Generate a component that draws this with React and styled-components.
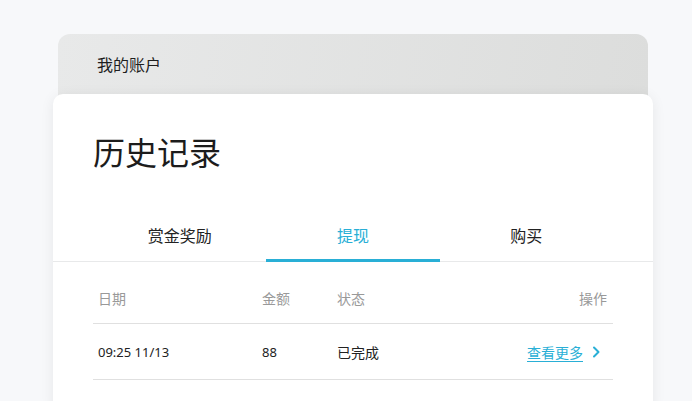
import styled, { createGlobalStyle } from 'styled-components';

const GlobalStyle = createGlobalStyle`
  html, body {
    margin: 0;
    padding: 0;
    background: #f7f8fa;
    font-family: "Noto Sans", "Noto Sans CJK SC", sans-serif;
    color: #222;
  }
`;

const Page = styled.div`
  padding: 34px 0 0 53px;
  width: 600px;
`;

const AccountBar = styled.div`
  margin: 0 5px;
  height: 64px;
  padding: 0 0 4px 39px;
  box-sizing: border-box;
  border-radius: 12px 12px 0 0;
  background: linear-gradient(100deg, #e8e9e9 0%, #dcdddc 100%);
  display: flex;
  align-items: center;
  font-size: 16px;
  color: #1e1e1e;
`;

const Card = styled.div`
  position: relative;
  margin-top: -4px;
  background: #fff;
  border-radius: 10px;
  box-shadow: 0 2px 14px rgba(0, 0, 0, 0.07);
  min-height: 320px;
`;

const Title = styled.h1`
  margin: 0;
  padding: 40px 40px 0;
  font-size: 32px;
  font-weight: 400;
  line-height: 38px;
  color: #1c1c1c;
`;

const Tabs = styled.div`
  margin-top: 36px;
  padding: 0 40px;
  display: grid;
  grid-template-columns: repeat(3, 1fr);
  border-bottom: 1px solid #e8e9ea;
`;

const Tab = styled.div`
  height: 54px;
  display: flex;
  align-items: center;
  justify-content: center;
  font-size: 16px;
  color: ${(p) => (p.$active ? '#29afd6' : '#222')};
  box-sizing: border-box;
  border-bottom: 3px solid ${(p) => (p.$active ? '#29afd6' : 'transparent')};
  margin-bottom: -1px;
  padding-top: 3px;
`;

const Table = styled.div`
  margin: 11px 40px 0;
`;

const Row = styled.div`
  display: grid;
  grid-template-columns: 164px 75px 1fr 120px;
  align-items: center;
  height: ${(p) => (p.$head ? '50px' : '55px')};
  padding: 0 6px 0 5px;
  border-bottom: 1px solid #e0e0e0;
  font-size: ${(p) => (p.$head ? '14px' : '13px')};
  color: ${(p) => (p.$head ? '#999' : '#222')};
`;

const Cell = styled.div`
  text-align: ${(p) => (p.$right ? 'right' : 'left')};
`;

const Status = styled.span`
  font-size: 14px;
`;

const MoreLink = styled.a`
  display: inline-flex;
  align-items: center;
  gap: 8px;
  margin-right: 6px;
  color: #29afd6;
  font-size: 14px;
  cursor: pointer;
  span {
    text-decoration: underline;
    text-underline-offset: 3px;
  }
`;

function Chevron() {
  return (
    <svg width="10" height="12" viewBox="0 0 10 12" fill="none">
      <path d="M3 1.5L7.5 6L3 10.5" stroke="#29afd6" strokeWidth="2" strokeLinecap="round" strokeLinejoin="round" />
    </svg>
  );
}

export default function App() {
  const tabs = ['赏金奖励', '提现', '购买'];
  const active = '提现';
  const rows = [{ date: '09:25 11/13', amount: '88', status: '已完成' }];

  return (
    <>
      <GlobalStyle />
      <Page>
        <AccountBar>我的账户</AccountBar>
        <Card>
          <Title>历史记录</Title>
          <Tabs>
            {tabs.map((t) => (
              <Tab key={t} $active={t === active}>{t}</Tab>
            ))}
          </Tabs>
          <Table>
            <Row $head>
              <Cell>日期</Cell>
              <Cell>金额</Cell>
              <Cell>状态</Cell>
              <Cell $right>操作</Cell>
            </Row>
            {rows.map((r) => (
              <Row key={r.date}>
                <Cell>{r.date}</Cell>
                <Cell>{r.amount}</Cell>
                <Cell><Status>{r.status}</Status></Cell>
                <Cell $right>
                  <MoreLink><span>查看更多</span><Chevron /></MoreLink>
                </Cell>
              </Row>
            ))}
          </Table>
        </Card>
      </Page>
    </>
  );
}
